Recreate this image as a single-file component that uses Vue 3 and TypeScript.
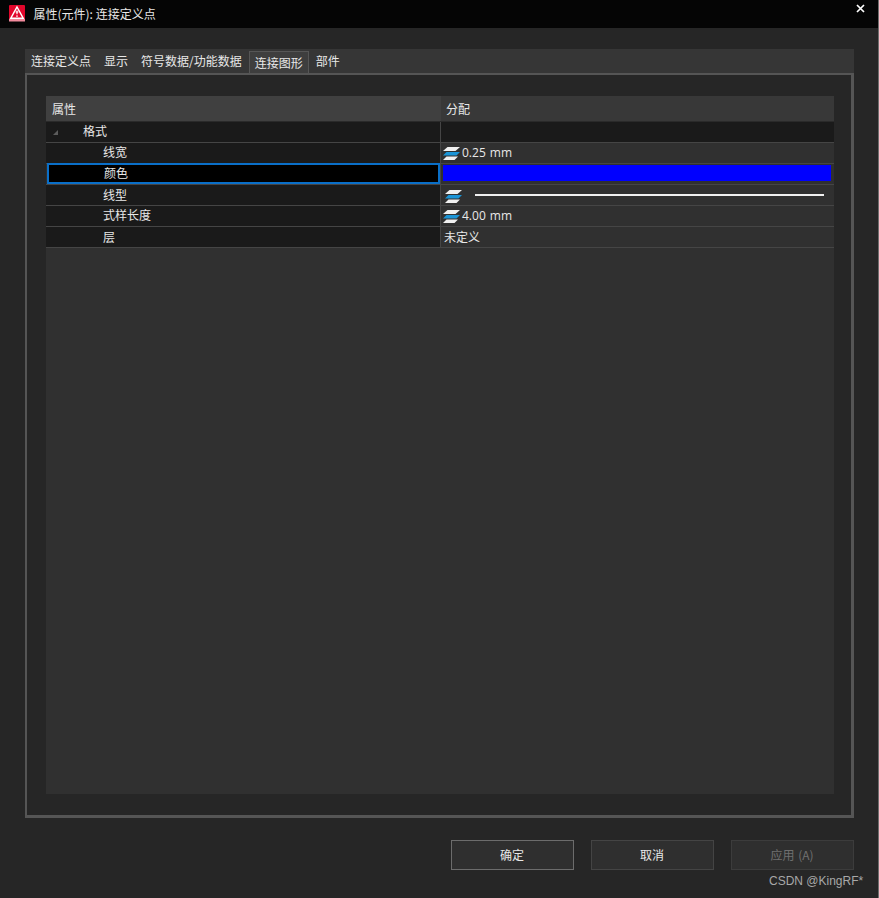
<script setup lang="ts">
interface Row {
  label: string
  indent: number
  value?: string
  low?: boolean
  kind: 'group' | 'text' | 'stack' | 'color' | 'line'
}

const tabs = ['连接定义点', '显示', '符号数据/功能数据', '连接图形', '部件']
const activeTab = '连接图形'
const rows: Row[] = [
  { label: '格式', indent: 37, kind: 'group' },
  { label: '线宽', indent: 57, kind: 'stack', value: '0.25 mm' },
  { label: '颜色', indent: 57, kind: 'color' },
  { label: '线型', indent: 57, kind: 'line', low: true },
  { label: '式样长度', indent: 57, kind: 'stack', value: '4.00 mm' },
  { label: '层', indent: 57, kind: 'text', value: '未定义', low: true }
]
</script>

<template>
  <div class="window">
    <header class="titlebar">
      <svg class="logo" width="16" height="17" viewBox="0 0 16 17">
        <rect width="16" height="16" rx="1" fill="#e2062b" />
        <rect y="14" width="16" height="2.5" fill="#f28a9c" />
        <path d="M8 2 L14.2 13.2 H1.8 Z" fill="none" stroke="#fff" stroke-width="1.5" />
        <path d="M8 5.5 V9.2 M6.6 7 H9.4 M8 10.2 V12" stroke="#fff" stroke-width="1.2" />
      </svg>
      <span class="title">属性(元件): 连接定义点</span>
      <svg class="close" width="9" height="9" viewBox="0 0 9 9">
        <path d="M1 1 L8 8 M8 1 L1 8" stroke="#fff" stroke-width="1.7" />
      </svg>
    </header>

    <main class="content">
      <nav class="tabs">
        <span v-for="t in tabs" :key="t" class="tab" :class="{ active: t === activeTab }">{{ t }}</span>
      </nav>
      <section class="panel">
        <div class="grid">
          <div class="head">
            <div class="head-left">属性</div>
            <div class="head-right">分配</div>
          </div>
          <div v-for="r in rows" :key="r.label" class="row" :class="{ selected: r.kind === 'color', group: r.kind === 'group', low: r.low }">
            <div class="cell-left" :style="{ paddingLeft: r.indent + 'px' }">
              <svg v-if="r.kind === 'group'" class="caret" width="5" height="5" viewBox="0 0 5 5">
                <path d="M5 0 V5 H0 Z" fill="#5c5c5c" />
              </svg>
              {{ r.label }}
            </div>
            <div class="cell-right">
              <div v-if="r.kind === 'color'" class="swatch"></div>
              <template v-else-if="r.kind === 'stack' || r.kind === 'line'">
                <svg class="stack" :class="{ lineicon: r.kind === 'line' }" width="17" height="15" viewBox="0 0 17 15">
                  <path d="M0 14 L3.5 10.5 H15 L11.5 14 Z" fill="#f0f0f0" />
                  <path d="M0 9.5 L3.5 6 H17 L13.5 9.5 Z" fill="#1a94d6" />
                  <path d="M0 5 L4.5 1 H17 L12.5 5 Z" fill="#f0f0f0" />
                </svg>
                <span v-if="r.value" class="value">{{ r.value }}</span>
                <span v-else class="linesample"></span>
              </template>
              <span v-else-if="r.kind === 'text'" class="plain">{{ r.value }}</span>
            </div>
          </div>
        </div>
      </section>
      <footer class="actions">
        <button class="btn primary">确定</button>
        <button class="btn">取消</button>
        <button class="btn disabled">应用 (A)</button>
      </footer>
    </main>
    <div class="mark">CSDN @KingRF*</div>
  </div>
</template>

<style>
html, body { margin: 0; background: #262626; }
</style>

<style scoped>
.window {
  position: relative;
  width: 879px;
  height: 898px;
  box-sizing: border-box;
  background: #262626;
  border-right: 1px solid #6e6e6e;
  color: #e8e8e8;
  font: 12px "Noto Sans CJK SC", "Liberation Sans", sans-serif;
  overflow: hidden;
}
.titlebar {
  display: flex;
  align-items: center;
  height: 28px;
  padding: 0 13px 0 9px;
  background: #050505;
}
.logo { margin-right: 8px; margin-top: -1px; }
.title { line-height: 16px; flex: 1; margin-left: 0.5px; }
.close { margin-top: -12px; }
.content { padding: 21px 24px 0 25px; }
.tabs {
  display: flex;
  align-items: flex-end;
  height: 24px;
  padding-left: 6px;
  background: #363636;
}
.tab {
  height: 22px;
  line-height: 19px;
  margin-right: 13px;
  white-space: nowrap;
}
.tab.active {
  box-sizing: border-box;
  margin: 0 7px 0 -6px;
  padding: 0 5px;
  line-height: 21px;
  background: #3e3e3e;
  border: 1px solid #565656;
  border-bottom: 0;
}
.panel {
  box-sizing: border-box;
  height: 745px;
  padding: 21px 17px 21px 19px;
  border: 2px solid #555;
  border-right-width: 3px;
  border-bottom-width: 3px;
}
.grid {
  height: 698px;
  background: #303030;
}
.head {
  display: flex;
  height: 26px;
  box-sizing: border-box;
  border-bottom: 1px solid #2a2a2a;
  line-height: 25px;
}
.head-left {
  box-sizing: border-box;
  width: 395px;
  padding-left: 6px;
  background: #404040;
}
.head-right {
  flex: 1;
  padding-left: 5px;
  background: #383838;
}
.row {
  display: flex;
  height: 21px;
  box-sizing: border-box;
  border-bottom: 1px solid #454545;
  line-height: 18px;
}
.row.low { line-height: 20px; }
.cell-left {
  position: relative;
  box-sizing: border-box;
  width: 394px;
  background: #1a1a1a;
}
.caret { position: absolute; left: 7px; top: 8px; }
.cell-right {
  flex: 1;
  display: flex;
  align-items: center;
  box-sizing: border-box;
  border-left: 1px solid #454545;
  background: #303030;
}
.row.group .cell-right { background: #1a1a1a; }
.row.selected .cell-left {
  margin-left: 1px;
  width: 393px;
  height: 21px;
  margin-top: -1px;
  background: #000;
  border: 2px solid #0a6fc8;
  line-height: 16px;
  padding-left: 55px !important;
}
.swatch {
  width: 388px;
  height: 16px;
  margin: 0 0 2px 2px;
  background: #0000ff;
}
.stack { margin: 0 0 0 2px; flex: none; }
.stack.lineicon { margin: 2px 0 0 4px; }
.value {
  margin: -1px 0 0 2px;
  font-family: "Open Sans", "Liberation Sans", sans-serif;
  font-size: 12px;
  word-spacing: 1px;
  color: #e8e8e8;
}
.linesample {
  width: 349px;
  height: 2px;
  margin: -1px 0 0 13px;
  background: #f0f0f0;
}
.plain { padding-left: 3px; }
.actions {
  display: flex;
  justify-content: flex-end;
  gap: 17px;
  margin-top: 22px;
}
.btn {
  box-sizing: border-box;
  width: 123px;
  height: 30px;
  padding: 0 1px 2px 0;
  background: #2f2f2f;
  border: 1px solid #444;
  color: #e8e8e8;
  font: inherit;
}
.btn.primary { border-color: #6c6c6c; }
.btn.disabled { color: #6f6f6f; border-color: #3c3c3c; word-spacing: 1px; }
.mark {
  position: absolute;
  left: 769px;
  top: 873px;
  color: #a8a8a8;
  font-family: "Liberation Sans", sans-serif;
  font-size: 12px;
  line-height: 16px;
}
</style>
